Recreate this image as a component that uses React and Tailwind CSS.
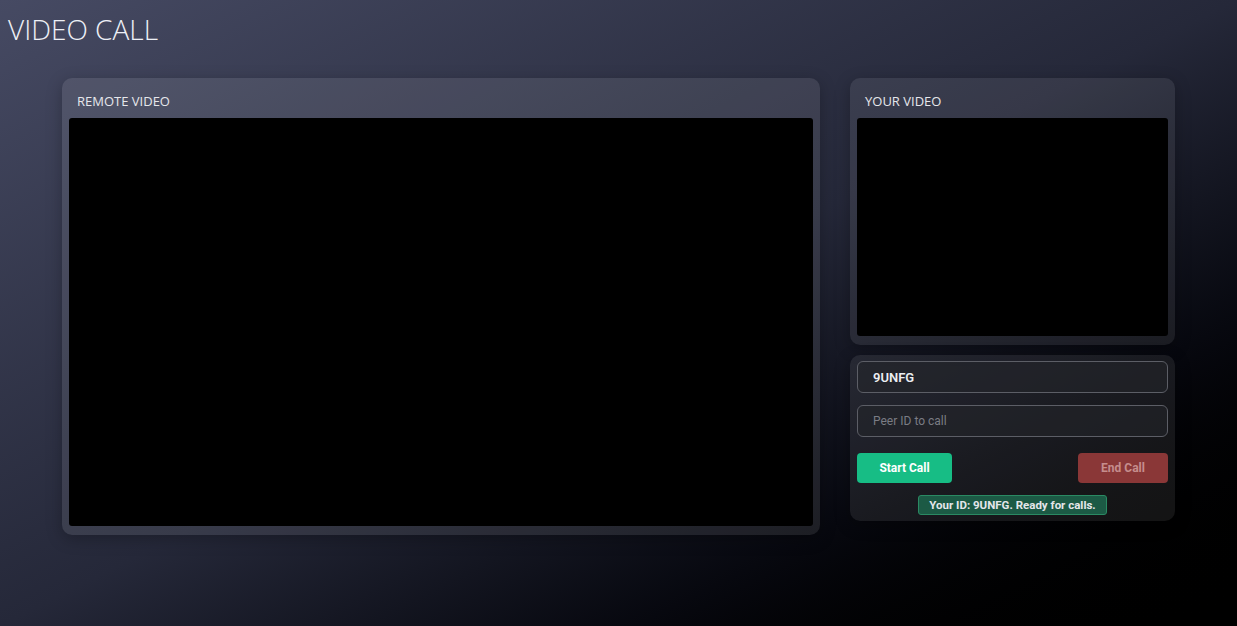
import { useState } from 'react';

const App = () => {
  const [peerId, setPeerId] = useState('');

  return (
    <div className="min-h-screen w-full bg-linear-to-br from-[#464a63] via-[#252839] to-[#000000] font-['Open_Sans',sans-serif] text-white">
      <h1 className="pl-2 pt-[11px] text-[28px] font-light leading-[36px] text-[#eef0f6]">VIDEO CALL</h1>

      <div className="ml-[62px] mt-[31px] flex w-[1113px] items-start gap-[30px]">
        {/* Remote video */}
        <div className="flex h-[457px] w-[758px] flex-col rounded-[10px] bg-white/[0.09] px-[7px] pb-[9px] shadow-[0_4px_16px_rgba(0,0,0,0.25)]">
          <div className="flex h-[40px] items-center pl-2 pt-[7px] text-[13px] text-[#e6e7ec]">REMOTE VIDEO</div>
          <div className="flex-1 rounded-[3px] bg-black" />
        </div>

        <div className="flex w-[325px] flex-col gap-[10px]">
          {/* Local video */}
          <div className="flex h-[267px] flex-col rounded-[10px] bg-white/[0.08] px-[7px] pb-[9px] shadow-[0_4px_16px_rgba(0,0,0,0.25)]">
            <div className="flex h-[40px] items-center pl-2 pt-[7px] text-[13px] text-[#e6e7ec]">YOUR VIDEO</div>
            <div className="flex-1 rounded-[3px] bg-black" />
          </div>

          {/* Controls */}
          <div className="flex h-[166px] flex-col rounded-[10px] bg-white/[0.08] px-[7px] pt-[6px] font-['Roboto',sans-serif] shadow-[0_4px_16px_rgba(0,0,0,0.25)]">
            <input
              readOnly
              value="9UNFG"
              className="h-[32px] w-full rounded-[6px] border border-[#5c5e66] bg-[#232429]/60 px-[15px] text-[13px] font-semibold text-[#eceef2] outline-none"
            />
            <input
              placeholder="Peer ID to call"
              value={peerId}
              onChange={e => setPeerId(e.target.value)}
              className="mt-[12px] h-[32px] w-full rounded-[6px] border border-[#5c5e66] bg-[#232429]/60 px-[15px] text-[12px] text-[#eceef2] outline-none placeholder:text-[#7a7c84]"
            />
            <div className="mt-[16px] flex items-center justify-between">
              <button className="h-[30px] w-[95px] rounded-[4px] bg-[#17bd85] text-[12px] font-bold text-white">Start Call</button>
              <button disabled className="h-[30px] w-[90px] rounded-[4px] bg-[#8a3737] text-[12px] font-bold text-[#c58d8d]">End Call</button>
            </div>
            <div className="mt-[12px] flex justify-center">
              <span className="rounded-[3px] border border-[#2a8a63] bg-[#1c5a45] px-[10px] py-[1px] text-[11.5px] font-bold leading-[16px] text-[#e4e6ea]">
                Your ID: 9UNFG. Ready for calls.
              </span>
            </div>
          </div>
        </div>
      </div>
    </div>
  );
};

export default App;
